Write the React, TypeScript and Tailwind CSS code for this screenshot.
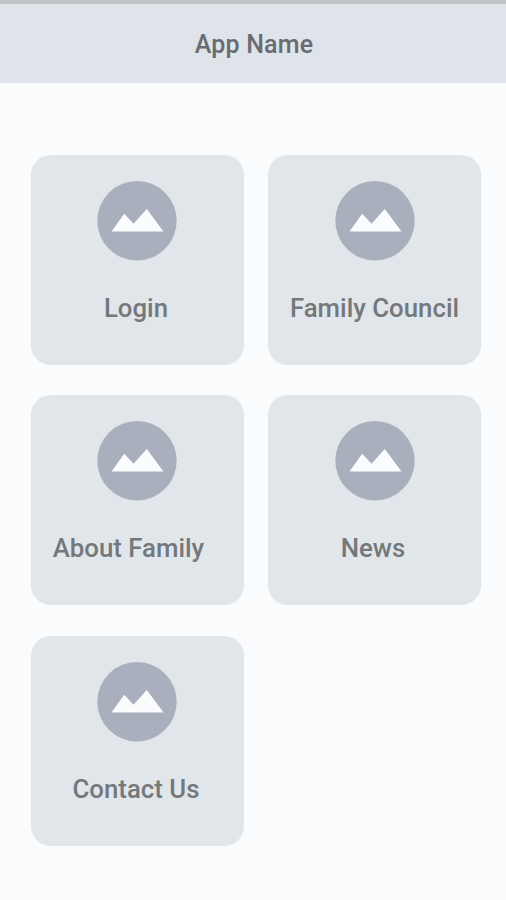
const tiles = [
  { label: 'Login', shift: 'pr-[3px]' },
  { label: 'Family Council', shift: '' },
  { label: 'About Family', shift: 'pr-[18px]' },
  { label: 'News', shift: 'pr-[3px]' },
  { label: 'Contact Us', shift: 'pr-[3px]' },
];

function MountainIcon() {
  return (
    <svg viewBox="0 0 80 80" className="size-20 group-odd:mr-px" aria-hidden="true">
      <circle cx="40" cy="39.8" r="39.7" fill="#a9afbc" />
      <path d="M14.5 50.6 27.2 32.8 36.5 42.8 49.8 28 66.5 50.6Z" fill="#fafcfe" />
    </svg>
  );
}

export default function App() {
  return (
    <div className="h-[900px] w-[506px] bg-[#f9fbfd] font-['Roboto',sans-serif] font-medium text-[#75787b]">
      {/* Header */}
      <header className="flex h-[83px] items-center justify-center border-t-4 border-[#bfc1c5] bg-[#dfe3ea] pt-0.5 pl-0.5">
        <h1 className="text-[25px] leading-8 tracking-[0.2px] text-[#696c70]">App Name</h1>
      </header>

      {/* Menu tiles */}
      <main className="grid grid-cols-[213px_213px] gap-x-6 gap-y-[30.3px] pt-[72px] pl-[31px]">
        {tiles.map(({ label, shift }) => (
          <button
            key={label}
            type="button"
            className="group flex h-[210px] flex-col items-center rounded-[20px] bg-[#e1e6ea] pt-[26px]"
          >
            <MountainIcon />
            <span className={`mt-[31px] text-[25.8px] leading-8 whitespace-nowrap ${shift}`}>{label}</span>
          </button>
        ))}
      </main>
    </div>
  );
}
